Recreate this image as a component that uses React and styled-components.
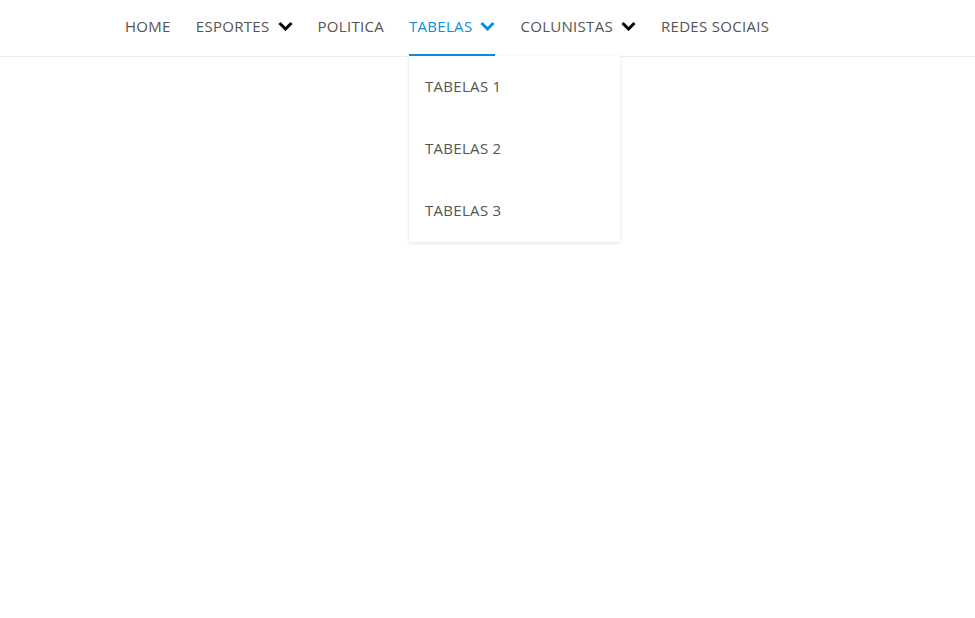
import React from "react";
import styled, { createGlobalStyle } from "styled-components";

const Global = createGlobalStyle`
  html, body { margin: 0; padding: 0; background: #fff; height: 100%; }
  #root { min-height: 100%; }
  body { font-family: "Open Sans", "Liberation Sans", sans-serif; }
`;

const Page = styled.div`
  min-height: 618px;
  background: #fff;
`;

const Header = styled.header`
  position: relative;
  height: 56px;
  border-bottom: 1px solid #eeeeee;
  background: #fff;
`;

const Menu = styled.ul`
  list-style: none;
  margin: 0;
  padding: 0 0 0 125px;
  height: 100%;
  display: flex;
  gap: 25px;
`;

const Item = styled.li`
  position: relative;
  display: flex;
  align-items: center;
  gap: 8px;
  height: 100%;
  box-sizing: border-box;
  padding-bottom: 4px;
  font-size: 15px;
  letter-spacing: 0.3px;
  color: ${p => (p.$active ? "#0a8fdc" : "#545454")};
  box-shadow: ${p => (p.$active ? "inset 0 -2px 0 #0a8fdc" : "none")};
  cursor: pointer;
`;

const Chevron = styled.svg`
  width: 15px;
  height: 10px;
  display: block;
`;

const Dropdown = styled.ul`
  position: absolute;
  top: 56px;
  left: 0;
  width: 211px;
  margin: 0;
  padding: 0;
  list-style: none;
  background: #fff;
  box-shadow: 0 1px 4px rgba(0, 0, 0, 0.12);
  z-index: 10;
`;

const DropItem = styled.li`
  height: 62px;
  box-sizing: border-box;
  display: flex;
  align-items: center;
  padding: 0 0 2px 16px;
  font-size: 15px;
  letter-spacing: 0.3px;
  color: #545454;
`;

const Arrow = ({ color }) => (
  <Chevron viewBox="0 0 15 10">
    <polyline points="1.5,2 7.5,8 13.5,2" fill="none" stroke={color} strokeWidth="3" strokeLinecap="butt" strokeLinejoin="miter" />
  </Chevron>
);

export default function App() {
  return (
    <Page>
      <Global />
      <Header>
        <Menu>
          <Item>HOME</Item>
          <Item>ESPORTES <Arrow color="#000" /></Item>
          <Item>POLITICA</Item>
          <Item $active>
            TABELAS <Arrow color="#0a8fdc" />
            <Dropdown>
              <DropItem>TABELAS 1</DropItem>
              <DropItem>TABELAS 2</DropItem>
              <DropItem>TABELAS 3</DropItem>
            </Dropdown>
          </Item>
          <Item>COLUNISTAS <Arrow color="#000" /></Item>
          <Item>REDES SOCIAIS</Item>
        </Menu>
      </Header>
    </Page>
  );
}
